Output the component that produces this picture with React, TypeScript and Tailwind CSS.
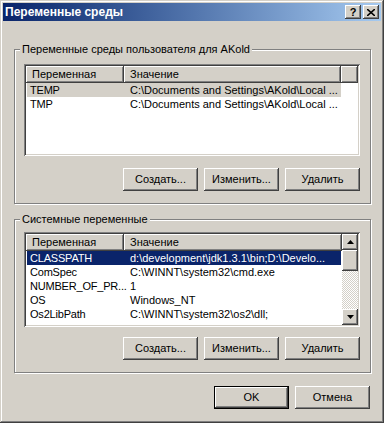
import React from 'react'

const raised =
  'shadow-[inset_-1px_-1px_#404040,inset_1px_1px_#ffffff,inset_-2px_-2px_#808080]'
const sunken =
  'shadow-[inset_1px_1px_#808080,inset_-1px_-1px_#ffffff,inset_2px_2px_#404040,inset_-2px_-2px_#d4d0c8]'

function Button({ label, isDefault }: { label: string; isDefault?: boolean }) {
  if (isDefault) {
    return (
      <div className="w-[75px] h-[23px] border border-black">
        <div className={`w-full h-full flex items-center justify-center bg-[#d4d0c8] ${raised}`}>{label}</div>
      </div>
    )
  }
  return (
    <div className={`w-[75px] h-[23px] flex items-center justify-center bg-[#d4d0c8] ${raised}`}>{label}</div>
  )
}

function ButtonRow() {
  return (
    <div className="flex justify-end gap-[6px]">
      <Button label="Создать..." />
      <Button label="Изменить..." />
      <Button label="Удалить" />
    </div>
  )
}

function Header() {
  return (
    <div className="flex h-[17px] shrink-0">
      <div className={`w-[98px] h-full pl-[6px] flex items-center bg-[#d4d0c8] ${raised}`}>Переменная</div>
      <div className={`w-[217px] h-full pl-[6px] flex items-center bg-[#d4d0c8] ${raised}`}>Значение</div>
      <div className={`flex-1 h-full bg-[#d4d0c8] ${raised}`}></div>
    </div>
  )
}

type Row = { name: string; value: string; sel?: 'active' | 'inactive' }

function Rows({ rows }: { rows: Row[] }) {
  return (
    <div className="flex flex-col">
      {rows.map((r) => (
        <div key={r.name} className="flex h-[14px] items-center">
          <div
            className={`flex h-full w-[314px] ml-[1px] items-center ${
              r.sel === 'active'
                ? 'bg-[#0a246a] text-white'
                : r.sel === 'inactive'
                ? 'bg-[#d4d0c8]'
                : ''
            }`}
          >
            <div className="w-[97px] shrink-0 pl-[3px] whitespace-nowrap tracking-[-0.2px]">{r.name}</div>
            <div className="pl-[6px] whitespace-nowrap">{r.value}</div>
          </div>
        </div>
      ))}
    </div>
  )
}

function Arrow({ up }: { up?: boolean }) {
  return (
    <div className={`w-[16px] h-[16px] flex items-center justify-center bg-[#d4d0c8] ${raised}`}>
      <svg width="7" height="4" viewBox="0 0 7 4">
        {up ? <path d="M3.5 0 L7 4 L0 4 Z" fill="#000" /> : <path d="M0 0 L7 0 L3.5 4 Z" fill="#000" />}
      </svg>
    </div>
  )
}

function Group({ title, children, height }: { title: string; children: React.ReactNode; height: string }) {
  return (
    <div
      className={`relative w-[357px] ${height} border border-[#808080] shadow-[1px_1px_0_#ffffff,inset_1px_1px_0_#ffffff]`}
    >
      <span className="absolute left-[5px] -top-[8px] px-[2px] bg-[#d4d0c8] leading-[14px]">{title}</span>
      {children}
    </div>
  )
}

export default function App() {
  const userRows: Row[] = [
    { name: 'TEMP', value: 'C:\\Documents and Settings\\AKold\\Local ...', sel: 'inactive' },
    { name: 'TMP', value: 'C:\\Documents and Settings\\AKold\\Local ...' },
  ]
  const sysRows: Row[] = [
    { name: 'CLASSPATH', value: 'd:\\development\\jdk1.3.1\\bin;D:\\Develo...', sel: 'active' },
    { name: 'ComSpec', value: 'C:\\WINNT\\system32\\cmd.exe' },
    { name: 'NUMBER_OF_PR...', value: '1' },
    { name: 'OS', value: 'Windows_NT' },
    { name: 'Os2LibPath', value: 'C:\\WINNT\\system32\\os2\\dll;' },
  ]

  return (
    <div
      className={`w-[384px] h-[423px] p-[3px] bg-[#d4d0c8] text-black text-[11px] font-['Liberation_Sans',Arial,sans-serif] shadow-[inset_-1px_-1px_#404040,inset_1px_1px_#d4d0c8,inset_-2px_-2px_#808080,inset_2px_2px_#ffffff]`}
    >
      {/* Title bar */}
      <div className="h-[18px] flex items-center justify-between pl-[2px] pr-[2px] bg-gradient-to-r from-[#0a246a] to-[#a6caf0]">
        <span className="text-white font-bold text-[12px]">Переменные среды</span>
        <div className="flex gap-[2px]">
          <div className={`w-[16px] h-[14px] flex items-center justify-center bg-[#d4d0c8] font-bold text-[11px] leading-none ${raised}`}>
            ?
          </div>
          <div className={`w-[16px] h-[14px] flex items-center justify-center bg-[#d4d0c8] ${raised}`}>
            <svg width="8" height="7" viewBox="0 0 8 7">
              <path d="M0 0 L8 7 M8 0 L0 7" stroke="#000" strokeWidth="1.6" />
            </svg>
          </div>
        </div>
      </div>

      <div className="pl-[11px] pt-[28px]">
        <Group title="Переменные среды пользователя для AKold" height="h-[155px]">
          <div className="pl-[9px] pr-[10px] pt-[14px]">
            <div className={`w-[336px] h-[92px] p-[2px] bg-white ${sunken}`}>
              <Header />
              <Rows rows={userRows} />
            </div>
            <div className="mt-[12px]">
              <ButtonRow />
            </div>
          </div>
        </Group>

        <div className="mt-[15px]">
          <Group title="Системные переменные" height="h-[154px]">
            <div className="pl-[9px] pr-[10px] pt-[12px]">
              <div className={`w-[336px] h-[95px] p-[2px] bg-white flex ${sunken}`}>
                <div className="flex-1 flex flex-col">
                  <div className="flex h-[17px] shrink-0">
                    <div className={`w-[98px] h-full pl-[6px] flex items-center bg-[#d4d0c8] ${raised}`}>Переменная</div>
                    <div className={`flex-1 h-full pl-[6px] flex items-center bg-[#d4d0c8] ${raised}`}>Значение</div>
                  </div>
                  <Rows rows={sysRows} />
                </div>
                <div className="w-[16px] flex flex-col">
                  <Arrow up />
                  <div className={`h-[21px] bg-[#d4d0c8] ${raised}`}></div>
                  <div className="flex-1 bg-[repeating-conic-gradient(#d4d0c8_0_25%,#ffffff_0_50%)] bg-[length:2px_2px]"></div>
                  <Arrow />
                </div>
              </div>
              <div className="mt-[10px]">
                <ButtonRow />
              </div>
            </div>
          </Group>
        </div>

        <div className="flex justify-end gap-[6px] mt-[13px] pr-[11px]">
          <Button label="OK" isDefault />
          <Button label="Отмена" />
        </div>
      </div>
    </div>
  )
}
